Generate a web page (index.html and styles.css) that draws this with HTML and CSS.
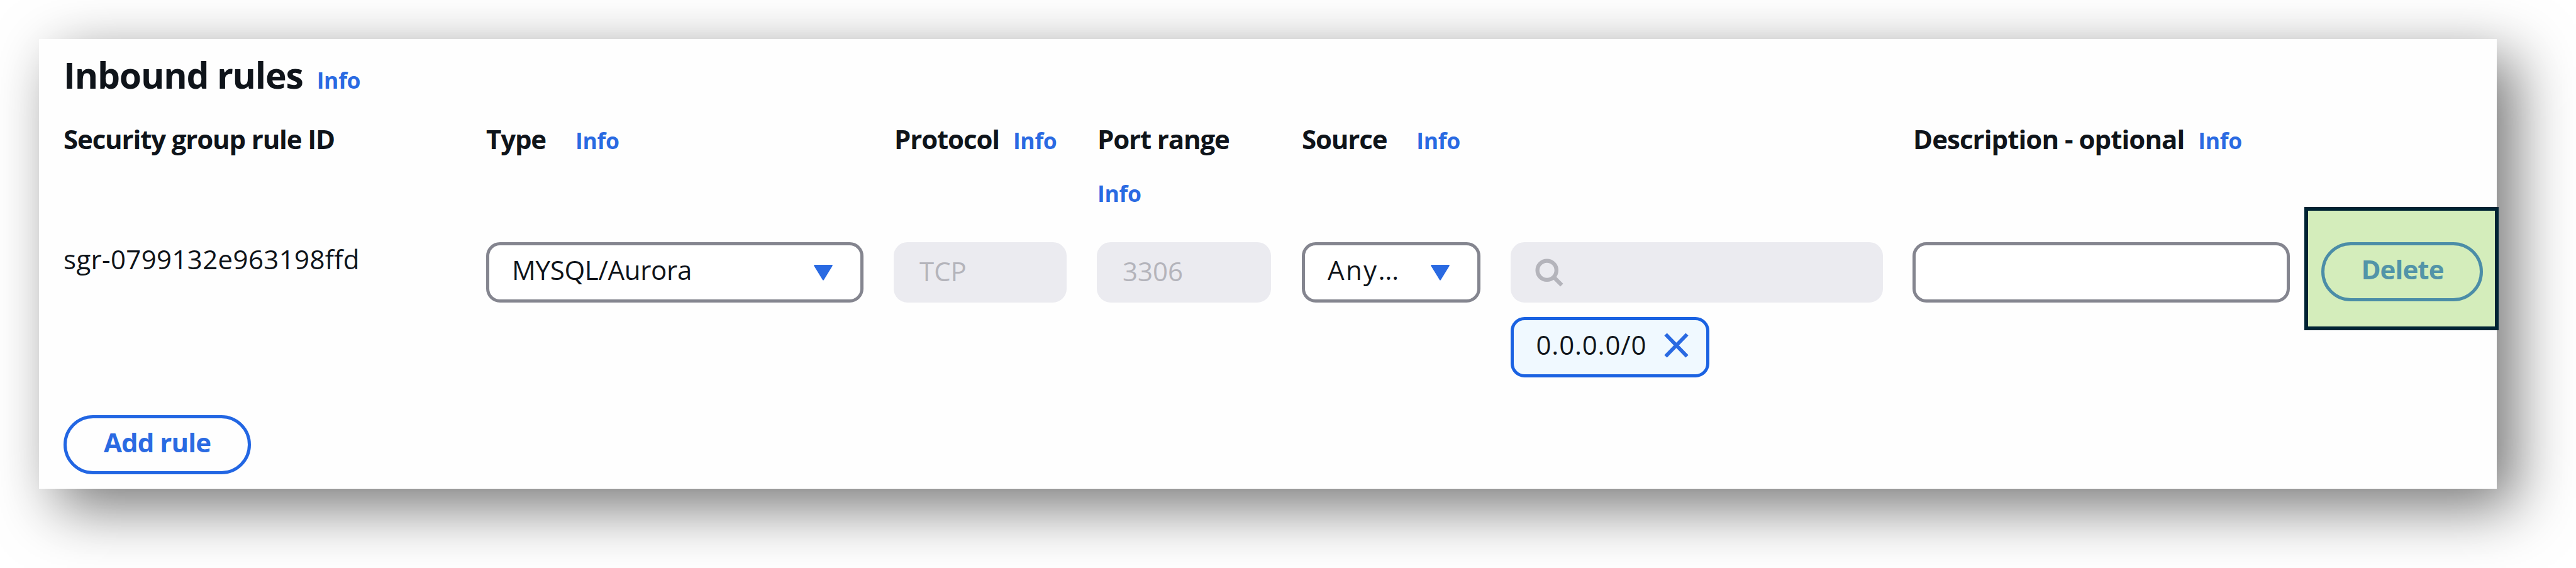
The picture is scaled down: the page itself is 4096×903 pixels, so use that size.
FILE: index.html
```html
<!DOCTYPE html>
<html lang="en">
<head>
<meta charset="utf-8">
<title>Inbound rules</title>
<link rel="stylesheet" href="styles.css">
</head>
<body>
<main class="card">
  <div class="title-row"><h1 class="title">Inbound rules</h1><a class="info">Info</a></div>
  <div class="grid heads">
    <div class="head"><span class="label">Security group rule ID</span></div>
    <div class="head"><span class="label">Type</span><a class="info wide">Info</a></div>
    <div class="head inset"><span class="label">Protocol</span><a class="info">Info</a></div>
    <div class="head inset"><span class="label">Port range</span><br><a class="info first">Info</a></div>
    <div class="head source"><span class="label">Source</span><a class="info wide">Info</a></div>
    <div class="head inset"><span class="label long">Description - optional</span><a class="info">Info</a></div>
  </div>
  <div class="grid rule">
    <div class="rule-id">sgr-0799132e963198ffd</div>
    <div class="control select type"><span class="type-text">MYSQL/Aurora</span><svg class="caret" viewBox="0 0 30 25"><path d="M1.5 0h27q2 0 1 2L16 24q-1 1.5-2 0L.5 2q-1-2 1-2z"/></svg></div>
    <div class="control disabled protocol">TCP</div>
    <div class="control disabled port">3306</div>
    <div class="control select origin"><span class="origin-text">Any…</span><svg class="caret" viewBox="0 0 30 25"><path d="M1.5 0h27q2 0 1 2L16 24q-1 1.5-2 0L.5 2q-1-2 1-2z"/></svg></div>
    <div class="cidr">
      <div class="control disabled search"><svg class="glass" viewBox="0 0 50 50"><circle cx="20.8" cy="20.8" r="16.8"/><path d="M32.5 32.5L47 47"/></svg></div>
      <div class="token"><span class="cidr-text">0.0.0.0/0</span><svg class="close" viewBox="0 0 39 40"><path d="M2.5 2.5L36.5 37.5M36.5 2.5L2.5 37.5"/></svg></div>
    </div>
    <div class="control description"></div>
    <div class="action"><div class="highlight"></div><button class="button delete">Delete</button></div>
  </div>
  <button class="button add">Add rule</button>
</main>
</body>
</html>
```
FILE: styles.css
```css
* { box-sizing: border-box; }

body {
  margin: 0;
  padding: 62px 0 0 62px;
  height: 903px;
  overflow: hidden;
  background: #fff;
  color: #0f141a;
  font-family: "Open Sans", "Noto Sans", sans-serif;
  font-size: 42px;
}

.card {
  width: 3908px;
  height: 715px;
  padding: 17px 0 0 39px;
  background: #fefefe;
  box-shadow: 29px 29px 89px rgba(0, 0, 0, 0.54);
}

.title-row { height: 80px; line-height: 80px; white-space: nowrap; }
.title { display: inline; margin: 0; font-size: 57px; font-weight: 700; letter-spacing: -1.2px; }

.info { margin-left: 22px; color: #2a6ae2; font-size: 35.5px; font-weight: 700; letter-spacing: -0.3px; }
.info.wide { margin-left: 47px; }
.info.first { margin-left: 0; }

.grid {
  display: grid;
  grid-template-columns: 672px 648px 323px 326px 331.5px 639.5px 1fr;
}
.heads { margin-top: 20px; height: 168px; line-height: 84px; white-space: nowrap; }
.head.source { grid-column: span 2; }
.head.inset { padding-left: 1px; }
.label { font-weight: 700; letter-spacing: -1.15px; }
.label.long { letter-spacing: -0.95px; }

.rule {
  grid-template-columns: 672px 648px 323px 326px 331.5px 639.5px 622.5px 1fr;
  align-items: start;
  height: 215px;
  margin: 38px -6px 0 0;
}
.rule-id { margin-top: -1px; line-height: 56px; letter-spacing: 0.36px; }

.control {
  display: flex;
  height: 96px;
  padding: 0 34px 0 36px;
  border: 5px solid #84858f;
  border-radius: 22px;
  background: #fff;
  line-height: 77px;
}
.disabled { border-color: #ebebf0; background: #ebebf0; color: #b4b4bb; line-height: 81px; }
.type, .description { width: 600px; }
.type-text { letter-spacing: -0.3px; }
.protocol { width: 275px; }
.port { width: 277px; }
.origin { width: 284px; }
.origin-text { letter-spacing: 2.4px; }
.search { width: 592px; padding-left: 34px; }

.caret { width: 30px; height: 25px; margin: 31px 10px 0 auto; fill: #2a6ae2; }
.glass { width: 45px; height: 45px; margin-top: 21px; fill: none; stroke: #b4b4bb; stroke-width: 7; }

.token {
  display: flex;
  justify-content: space-between;
  width: 316px;
  height: 96px;
  margin-top: 23px;
  padding: 0 28px 0 36px;
  border: 5px solid #1a62e2;
  border-radius: 22px;
  background: #f0f9ff;
  line-height: 77px;
}
.cidr-text { letter-spacing: 0.8px; }
.close { width: 39px; height: 40px; margin-top: 20px; fill: none; stroke: #2a6ae2; stroke-width: 6; }

.button {
  display: flex;
  align-items: flex-start;
  justify-content: center;
  height: 94px;
  padding: 0;
  border: 5px solid #2266e3;
  border-radius: 47px;
  background: transparent;
  color: #2a6ae2;
  font: 700 42px/76px "Open Sans", "Noto Sans", sans-serif;
  letter-spacing: -0.9px;
}

.action { position: relative; padding-left: 27px; }
.highlight {
  position: absolute;
  left: 0;
  top: -56px;
  width: 309px;
  height: 196px;
  border: 6px solid #002333;
  background: #d4edbb;
}
.delete { position: relative; width: 257px; padding-left: 2px; border-color: #4b8da7; color: #5294a8; }
.add { width: 298px; margin-top: 60px; }
```
